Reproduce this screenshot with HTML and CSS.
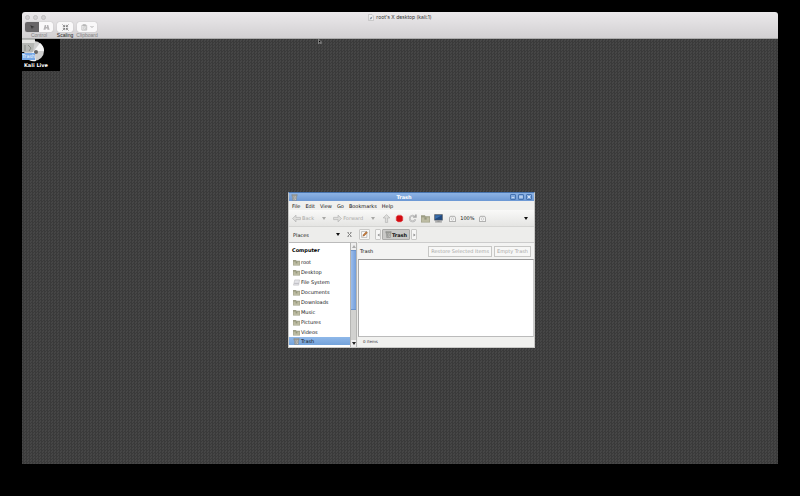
FILE: index.html
```html
<!DOCTYPE html>
<html lang="en">
<head>
<meta charset="utf-8">
<title>root's X desktop (kali:1)</title>
<link rel="stylesheet" href="styles.css">
</head>
<body>
<svg class="defs" aria-hidden="true">
  <symbol id="folder" viewBox="0 0 16 14"><path d="M0 1h7l1 2h8v11H0z" fill="#9c9d84"/><path d="M1 5h14v8H1z" fill="#bdbca3"/><path d="M6 5h4v4H6z" fill="#94967d"/></symbol>
  <symbol id="drive" viewBox="0 0 16 14"><path d="M4 1h11l-2 12H1z" fill="#e4e4e8" stroke="#a9a9ae"/><path d="M3 9h10" stroke="#8d8d92"/></symbol>
  <symbol id="trash" viewBox="0 0 16 16"><path d="M2 1h12v3H2zM3 4h10l-1 11H4z" fill="#c9cac6" stroke="#6f716d"/><path d="M6 6v7M8 6l2 3-2 4" stroke="#555" fill="none"/></symbol>
  <symbol id="left" viewBox="0 0 16 16"><path d="M1 8l6-6v4h8v4H7v4z" fill="#dededc" stroke="#aaa"/></symbol>
  <symbol id="down" viewBox="0 0 8 6"><path d="M0 0h8L4 6z" fill="currentColor"/></symbol>
  <symbol id="zoom" viewBox="0 0 16 16"><path d="M3 3h10l2 4v8H1V7z" fill="#f8f8f7" stroke="#888" stroke-width="1.5"/><circle cx="8" cy="9" r="3" fill="none" stroke="#999"/></symbol>
</svg>
<main class="viewer">
  <header class="chrome">
    <div class="chrome-title">
      <div class="lights"><i></i><i></i><i></i></div>
      <h1><svg class="doc" viewBox="0 0 12 14"><path d="M1 1h7l3 3v9H1z" fill="#eee" stroke="#aaa"/><path d="M3 11l2-4 4-2-2 5z" fill="#8390a5"/></svg>root's X desktop (kali:1)</h1>
    </div>
    <div class="tools">
      <div class="tool control"><div class="seg"><button class="on" aria-label="Control"><svg viewBox="0 0 16 16"><path d="M3 3l4 9 1-4 5-1z" fill="#333"/></svg></button><button aria-label="Observe"><svg viewBox="0 0 16 16"><path d="M4 2h3v5h2V2h3l3 11h-5v-3H6v3H1z" fill="#b5b3b5"/></svg></button></div><span>Control</span></div>
      <div class="tool scaling"><div class="seg"><button aria-label="Scaling"><svg viewBox="0 0 16 16"><path d="M1 1l5 5M6 2v4H2M15 1l-5 5M10 2v4h4M1 15l5-5M2 10h4v4M15 15l-5-5M14 10h-4v4" fill="none" stroke="#555" stroke-width="1.4"/></svg></button></div><span>Scaling</span></div>
      <div class="tool clip"><div class="seg"><button aria-label="Clipboard"><svg viewBox="0 0 16 16"><path d="M2 3h11v11H2zM5 1h5v3H5z" fill="none" stroke="#aaa" stroke-width="1.5"/><circle cx="9" cy="9" r="4" fill="#eee" stroke="#aaa"/><path d="M9 7v3h2" stroke="#999" fill="none"/></svg><svg class="chev" viewBox="0 0 8 8"><path d="M1 2l3 3 3-3" fill="none" stroke="#999" stroke-width="1.5"/></svg></button></div><span>Clipboard</span></div>
    </div>
  </header>
  <section class="desktop">
    <div class="icons">
      <svg class="disc" viewBox="0 0 38 24"><circle cx="12" cy="12" r="10" fill="#cfcfcf"/><path d="M12 12L18 4a10 10 0 0 1 4 8z" fill="#f6f6f6"/><path d="M12 12L4 18a10 10 0 0 0 10 4z" fill="#f1f1f1"/><circle cx="14" cy="13" r="2" fill="#666"/><path d="M0 0h13l-2 13H0z" fill="#b5b7b4"/><path d="M0 1h13v3H0z" fill="#e4e4e2"/><path d="M3 6v6M6 6l3 3-2 3" stroke="#858882" fill="none"/></svg>
      <span class="trash-label">Trash</span>
      <span class="live-label">Kali Live</span>
    </div>
    <svg class="cursor" viewBox="0 0 8 10"><path d="M1 0v8l2-2 2 3 1-1-1-3h2z" fill="#000" stroke="#ddd"/></svg>

    <article class="window">
      <div class="titlebar"><svg class="ico"><use href="#trash"/></svg><h2>Trash</h2><button aria-label="Minimize"><svg viewBox="0 0 6 6"><path d="M1 4h4" stroke="#fff"/></svg></button><button aria-label="Maximize"><svg viewBox="0 0 6 6"><path d="M1 2h4v2H1z" fill="none" stroke="#fff" stroke-width=".7"/></svg></button><button aria-label="Close"><svg viewBox="0 0 6 6"><path d="M1 1l4 4M5 1L1 5" stroke="#fff"/></svg></button></div>
      <nav class="menu"><a href="#">File</a><a href="#">Edit</a><a href="#">View</a><a href="#">Go</a><a href="#">Bookmarks</a><a href="#">Help</a></nav>
      <div class="toolbar">
        <button class="back" disabled><svg class="big"><use href="#left"/></svg>Back<svg class="arr"><use href="#down"/></svg></button>
        <button class="fwd" disabled><svg class="big flip"><use href="#left"/></svg>Forward<svg class="arr"><use href="#down"/></svg></button>
        <button disabled aria-label="Up"><svg class="big up"><use href="#left"/></svg></button>
        <button aria-label="Stop"><svg class="big" viewBox="0 0 16 16"><path d="M5 2h6l3 3v6l-3 3H5l-3-3V5z" fill="#d20b12" stroke="#e77"/></svg></button>
        <button aria-label="Reload"><svg class="big" viewBox="0 0 16 16"><path d="M13 9a5 5 0 1 1-2-5M9 5h5V1" fill="none" stroke="#aaa" stroke-width="3"/><path d="M13 9a5 5 0 1 1-2-5" fill="none" stroke="#eee"/></svg></button>
        <button aria-label="Home"><svg class="big"><use href="#folder"/></svg></button>
        <button aria-label="Computer"><svg class="big" viewBox="0 0 16 16"><path d="M1 1h14v10H1z" fill="#204a80" stroke="#555"/><path d="M2 2h12L2 9z" fill="#3d70ad"/><path d="M6 11h4v2h4v2H2v-2h4z" fill="#999"/></svg></button>
        <button class="zoom" aria-label="Zoom out"><svg class="small"><use href="#zoom"/></svg></button>
        <output>100%</output>
        <button aria-label="Zoom in"><svg class="small"><use href="#zoom"/></svg></button>
        <button class="view" aria-label="View mode"><svg class="arr"><use href="#down"/></svg></button>
      </div>
      <div class="location">
        <button class="places">Places<svg class="arr"><use href="#down"/></svg></button>
        <button class="shut" aria-label="Close side pane"><svg viewBox="0 0 8 8"><path d="M1 1l6 6M7 1L1 7M1 1h2M5 1h2M1 7h2M5 7h2" stroke="#777" stroke-width="1.3"/></svg></button>
        <button class="box edit" aria-label="Edit location"><svg viewBox="0 0 12 12"><path d="M1 1h9v10H1z" fill="#fff" stroke="#999"/><path d="M3 9l1-3 5-5 2 2-5 5z" fill="#c77a38" stroke="#754522" stroke-width=".6"/></svg></button>
        <button class="box step" aria-label="Previous"><svg viewBox="0 0 6 8"><path d="M5 1v6L1 4z" fill="#888"/></svg></button>
        <button class="box crumb"><svg class="ico"><use href="#trash"/></svg>Trash</button>
        <button class="box step" aria-label="Next"><svg viewBox="0 0 6 8"><path d="M1 1v6l4-3z" fill="#888"/></svg></button>
      </div>
      <div class="body">
        <aside>
          <div class="list">
            <h3>Computer</h3>
            <ul>
              <li><svg><use href="#folder"/></svg>root</li>
              <li><svg><use href="#folder"/></svg>Desktop</li>
              <li><svg><use href="#drive"/></svg>File System</li>
              <li><svg><use href="#folder"/></svg>Documents</li>
              <li><svg><use href="#folder"/></svg>Downloads</li>
              <li><svg><use href="#folder"/></svg>Music</li>
              <li><svg><use href="#folder"/></svg>Pictures</li>
              <li><svg><use href="#folder"/></svg>Videos</li>
              <li class="sel"><svg><use href="#trash"/></svg>Trash</li>
            </ul>
          </div>
          <div class="scroll"><button aria-label="Scroll up"><svg viewBox="0 0 8 6"><path d="M0 6h8L4 0z" fill="#aaa"/></svg></button><div class="thumb"></div><div class="track"></div><button aria-label="Scroll down"><svg viewBox="0 0 8 6"><path d="M0 0h8L4 6z" fill="#222"/></svg></button></div>
        </aside>
        <section class="content">
          <div class="info"><span>Trash</span><button disabled>Restore Selected Items</button><button disabled>Empty Trash</button></div>
          <div class="files"></div>
          <footer>0 items</footer>
        </section>
      </div>
    </article>
  </section>
</main>
</body>
</html>
```
FILE: styles.css
```css
* { box-sizing: border-box; }
body { margin: 0; background: #000; font: 5px/8px "DejaVu Sans", sans-serif; color: #111; }
h1, h2, h3, ul { margin: 0; padding: 0; font-size: 5px; list-style: none; }
button { margin: 0; padding: 0; border: 0; background: none; font: inherit; color: inherit; display: flex; align-items: center; justify-content: center; }
a { color: inherit; text-decoration: none; }
svg { display: block; flex: none; }
.defs { position: absolute; width: 0; height: 0; }

.viewer { height: 100vh; padding: 12px 22px 32px; display: flex; flex-direction: column; }
.chrome { height: 27px; background: linear-gradient(#ebe9eb, #d2d0d2); border-radius: 3px 3px 0 0; border-bottom: 1px solid #aaa; font-family: "Liberation Sans", sans-serif; }
.chrome-title { display: grid; grid-template-columns: 1fr auto 1fr; height: 10px; align-items: center; }
.chrome h1 { display: flex; align-items: center; gap: 2px; font-family: Inter, sans-serif; font-weight: 400; color: #333; }
.doc { width: 6px; height: 7px; }
.lights { display: flex; gap: 3px; padding-left: 3px; }
.lights i { width: 5px; height: 5px; border-radius: 50%; background: #d2d0d2; border: 1px solid #bfbdbf; }
.tools { display: flex; gap: 4px; padding-left: 3px; }
.tool { display: flex; flex-direction: column; align-items: center; color: #808080; line-height: 6px; }
.tool.scaling { color: #222; }
.seg { display: flex; height: 10px; width: 100%; background: #f9f8f9; border-radius: 2px; overflow: hidden; box-shadow: 0 0 1px #999; }
.seg button { flex: 1; }
.seg .on { background: #686668; }
.seg svg { width: 7px; height: 7px; }
.seg .chev { width: 4px; height: 4px; margin-left: 2px; }
.control { width: 28px; }
.scaling { width: 16px; }
.clip { width: 20px; }

.desktop { flex: 1; position: relative; overflow: hidden; background: repeating-conic-gradient(#3a3a3a 0 25%, #464646 0 50%) 0 0 / 3px 3px; }
.icons { position: absolute; left: 0; top: 0; width: 38px; height: 32px; background: #000; overflow: hidden; }
.disc { width: 38px; height: 24px; }
.trash-label { position: absolute; left: 0; top: 14px; width: 13px; background: #78a9e6; color: #fff; line-height: 7px; }
.live-label { position: absolute; left: 2px; top: 22px; color: #fff; font-weight: 700; white-space: nowrap; }
.cursor { position: absolute; left: 296px; top: 0; width: 4px; height: 6px; }

.window { position: absolute; left: 266px; top: 153px; width: 247px; height: 156px; display: flex; flex-direction: column; background: #ededeb; border: 1px solid #c8c8c6; border-top-color: #4874ae; }
.ico { width: 7px; height: 7px; }
.titlebar { display: flex; align-items: center; gap: 2px; height: 8px; padding: 0 2px; background: linear-gradient(#8db3e4, #6c98d4); color: #fff; }
.titlebar h2 { flex: 1; text-align: center; }
.titlebar button { width: 6px; height: 6px; border: 1px solid #4673b0; border-radius: 1px; }
.titlebar button svg { width: 4px; height: 4px; }
.menu { display: flex; gap: 5px; height: 9px; align-items: center; padding-left: 3px; background: #f0f0ee; }
.toolbar { display: flex; align-items: center; gap: 4px; height: 17px; padding: 0 6px 0 3px; background: linear-gradient(#f9f9f8, #e5e5e3); border-bottom: 1px solid #d5d5d3; }
.toolbar button:disabled { color: #a8a8a6; }
.big { width: 9px; height: 9px; }
.flip { transform: scaleX(-1); }
.up { transform: rotate(90deg); }
.small { width: 7px; height: 7px; }
.arr { width: 4px; height: 3px; margin-left: 7px; }
.back, .fwd { gap: 1px; margin-right: 3px; }
.zoom { margin-left: 2px; }
.view { margin-left: auto; }
.location { display: flex; align-items: center; height: 15px; padding-left: 4px; gap: 1px; }
.places { width: 47px; justify-content: space-between; }
.shut { width: 16px; }
.shut svg { width: 5px; height: 5px; }
.box { height: 11px; border: 1px solid #c9c9c7; border-radius: 1px; background: #f6f6f5; }
.edit { width: 11px; margin: 0 4px 0 1px; }
.edit svg { width: 7px; height: 7px; }
.step { width: 6px; }
.step svg { width: 3px; height: 4px; }
.crumb { width: 28px; background: #c9c9c7; border-color: #aaaaa8; font-weight: 700; }
.body { flex: 1; min-height: 0; display: flex; gap: 1px; }
aside { width: 68px; display: flex; background: #fff; border-top: 1px solid #bbb; }
.list { flex: 1; }
h3 { padding: 3px; line-height: 8px; color: #000; }
li { display: flex; align-items: center; gap: 1px; height: 10px; padding-left: 4px; }
li:last-child { height: 8px; }
li svg { width: 7px; height: 7px; }
.sel { background: linear-gradient(#8fb8e9, #74a3db); }
.scroll { width: 7px; display: flex; flex-direction: column; background: #d1d1cf; border: 1px solid #b5b5b3; border-width: 0 1px; }
.scroll button { height: 7px; background: #eee; }
.scroll svg { width: 4px; height: 3px; }
.thumb { flex: 1; background: linear-gradient(90deg, #9abceb, #749fdb); border: 1px solid #6c94cb; border-width: 1px 0; }
.track { height: 30px; }
.content { flex: 1; display: flex; flex-direction: column; min-width: 0; border-top: 1px solid #ccc; }
.info { display: flex; align-items: center; gap: 2px; height: 16px; padding: 0 3px 0 2px; background: #f3f3f2; }
.info span { flex: 1; }
.info button { height: 11px; padding: 0 2px; border: 1px solid #c7c7c5; background: #f7f7f6; color: #a8a8a6; white-space: nowrap; }
.files { flex: 1; background: #fff; border: 1px solid #aaa; border-color: #999 #ccc #bbb #aaa; }
footer { height: 10px; padding-left: 5px; font-size: 4px; line-height: 10px; color: #333; background: #f1f1ef; }
```
